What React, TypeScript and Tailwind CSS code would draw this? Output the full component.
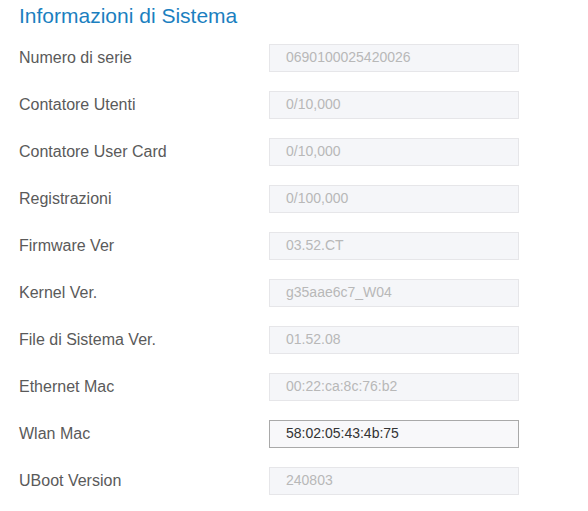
const rows: { label: string; value: string; editable?: boolean }[] = [
  { label: 'Numero di serie', value: '0690100025420026' },
  { label: 'Contatore Utenti', value: '0/10,000' },
  { label: 'Contatore User Card', value: '0/10,000' },
  { label: 'Registrazioni', value: '0/100,000' },
  { label: 'Firmware Ver', value: '03.52.CT' },
  { label: 'Kernel Ver.', value: 'g35aae6c7_W04' },
  { label: 'File di Sistema Ver.', value: '01.52.08' },
  { label: 'Ethernet Mac', value: '00:22:ca:8c:76:b2' },
  { label: 'Wlan Mac', value: '58:02:05:43:4b:75', editable: true },
  { label: 'UBoot Version', value: '240803' },
];

export default function App() {
  return (
    <div className="w-[588px] h-[511px] bg-white font-['Liberation_Sans',Arial,sans-serif]">
      <h2 className="h-[34px] pl-[19px] pt-[4px] text-[21px] leading-[24px] text-[#1b7fc0]">
        Informazioni di Sistema
      </h2>
      {rows.map((row) => (
        <div key={row.label} className="h-[47px] flex items-center">
          <div className="w-[269px] pl-[19px] text-[16px] text-[#5a5a5a]">{row.label}</div>
          <div
            className={`w-[250px] h-[28px] flex items-center pl-[16px] text-[14px] border ${
              row.editable
                ? 'border-[#a9a9a9] bg-[#f8f8fa] text-[#333333]'
                : 'border-[#e6e6e9] bg-[#f5f6f9] text-[#b8b8b8]'
            }`}
          >
            {row.value}
          </div>
        </div>
      ))}
    </div>
  );
}
